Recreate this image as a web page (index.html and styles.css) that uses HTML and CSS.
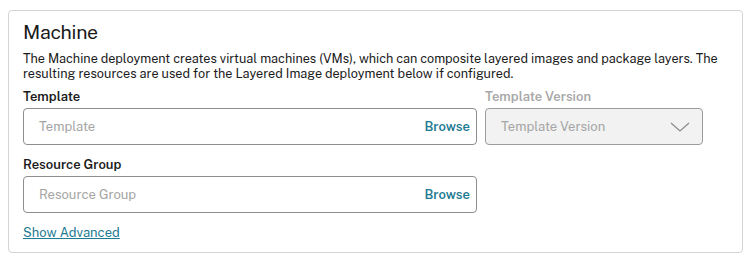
FILE: index.html
```html
<!DOCTYPE html>
<html lang="en">
<head>
    <meta charset="UTF-8">
    <title>Machine</title>
    <link rel="stylesheet" href="styles.css">
</head>
<body>
    <div class="card">
        <h2 class="card-title">Machine</h2>
        <p class="card-desc">The Machine deployment creates virtual machines (VMs), which can composite layered images and package layers. The resulting resources are used for the Layered Image deployment below if configured.</p>

        <div class="row">
            <div class="field field-main">
                <label class="field-label">Template</label>
                <div class="input-box">
                    <span class="placeholder">Template</span>
                    <span class="browse">Browse</span>
                </div>
            </div>
            <div class="field field-side">
                <label class="field-label disabled">Template Version</label>
                <div class="input-box select-disabled">
                    <span class="placeholder">Template Version</span>
                    <svg class="chevron" width="20" height="10" viewBox="0 0 20 10">
                        <polyline points="1,1 10,9 19,1" fill="none" stroke="#8a8a8a" stroke-width="1.2"/>
                    </svg>
                </div>
            </div>
        </div>

        <div class="row row-next">
            <div class="field field-main">
                <label class="field-label">Resource Group</label>
                <div class="input-box">
                    <span class="placeholder">Resource Group</span>
                    <span class="browse">Browse</span>
                </div>
            </div>
        </div>

        <a class="show-advanced" href="#">Show Advanced</a>
    </div>
</body>
</html>
```

FILE: styles.css
```css
body {
    margin: 0;
    padding: 10px 7px 0 8px;
    font-family: "Public Sans", Inter, "Liberation Sans", sans-serif;
    color: #1b1b1b;
    background: #fff;
}

.card {
    border: 1px solid #d4d4d4;
    border-radius: 4px;
    padding: 8px 14px 0 14px;
    box-sizing: border-box;
    height: 243px;
}

.card-title {
    margin: 0;
    font-size: 19.5px;
    letter-spacing: -0.3px;
    font-weight: 400;
    line-height: 26px;
}

.card-desc {
    margin: 6px 0 0 0;
    font-size: 12.65px;
    line-height: 15px;
}

.row {
    display: flex;
    gap: 8px;
    margin-top: 8px;
}

.row-next {
    margin-top: 12px;
}

.field-main {
    width: 454px;
}

.field-side {
    width: 218px;
}

.field-label {
    display: block;
    font-size: 13px;
    font-weight: 600;
    line-height: 16px;
    margin-bottom: 3px;
}

.field-label.disabled {
    color: #a8a8a8;
}

.input-box {
    display: flex;
    align-items: center;
    justify-content: space-between;
    height: 37px;
    box-sizing: border-box;
    border: 1px solid #8e8e8e;
    border-radius: 4px;
    padding: 0 6px 0 15px;
    font-size: 13px;
}

.placeholder {
    color: #a5a5a5;
}

.browse {
    color: #1d7b93;
    font-weight: 600;
}

.select-disabled {
    background: #f2f2f2;
    border-color: #9c9c9c;
    padding-right: 12px;
}

.show-advanced {
    display: inline-block;
    margin-top: 12px;
    font-size: 13px;
    color: #1d7b93;
    text-decoration: underline;
}
```
